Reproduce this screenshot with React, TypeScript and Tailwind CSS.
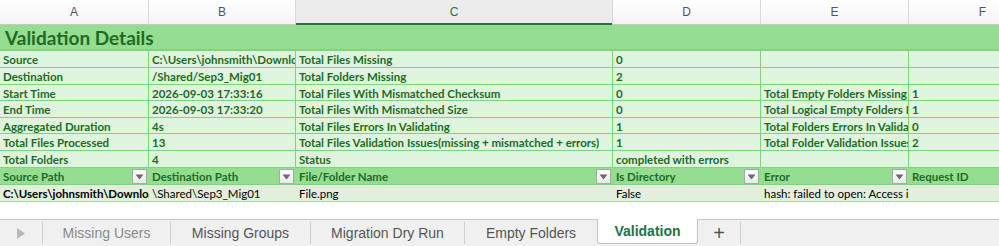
import React from "react";

const cols = "grid grid-cols-[149px_147px_317px_148px_148px_148px]";
const font = { fontFamily: "Lato, 'Liberation Sans', sans-serif" };

function Dd() {
  return (
    <span className="absolute right-[2px] top-[1px] w-[15px] h-[15px] border border-[#a9a9a9] bg-gradient-to-b from-white to-[#e9e9e9] flex items-center justify-center">
      <svg width="9" height="6" viewBox="0 0 9 6"><path d="M0.5 0.5 L8.5 0.5 L4.5 5.5 Z" fill="#6b6b6b" /></svg>
    </span>
  );
}

type Row = { cells: string[]; h: string };

const summary: Row[] = [
  { cells: ["Source", "C:\\Users\\johnsmith\\Downloads\\Sep3", "Total Files Missing", "0", "", ""], h: "h-[17px]" },
  { cells: ["Destination", "/Shared/Sep3_Mig01", "Total Folders Missing", "2", "", ""], h: "h-[17px]" },
  { cells: ["Start Time", "2026-09-03 17:33:16", "Total Files With Mismatched Checksum", "0", "Total Empty Folders Missing", "1"], h: "h-[16px]" },
  { cells: ["End Time", "2026-09-03 17:33:20", "Total Files With Mismatched Size", "0", "Total Logical Empty Folders Missing", "1"], h: "h-[17px]" },
  { cells: ["Aggregated Duration", "4s", "Total Files Errors In Validating", "1", "Total Folders Errors In Validating", "0"], h: "h-[16px]" },
  { cells: ["Total Files Processed", "13", "Total Files Validation Issues(missing + mismatched + errors)", "1", "Total Folder Validation Issues", "2"], h: "h-[17px]" },
  { cells: ["Total Folders", "4", "Status", "completed with errors", "", ""], h: "h-[17px]" },
];

const filterHead = ["Source Path", "Destination Path", "File/Folder Name", "Is Directory", "Error", "Request ID"];
const dataRow = ["C:\\Users\\johnsmith\\Downloads\\Sep3\\File.png", "\\Shared\\Sep3_Mig01", "File.png", "False", "hash: failed to open: Access is denied.", ""];

export default function App() {
  const letters = ["A", "B", "C", "D", "E", "F"];
  return (
    <div className="w-[999px] h-[246px] overflow-hidden bg-white relative" style={font}>
      {/* column headers */}
      <div className={`${cols} h-[25px] border-b border-[#c6c6c6] bg-gradient-to-b from-white to-[#f4f4f4]`}>
        {letters.map((l, i) =>
          i === 2 ? (
            <div key={l} className="relative bg-[#ececec] flex items-center justify-center text-[12px] text-[#217346] border-r border-[#dadada]" style={{ fontFamily: "'Liberation Sans', sans-serif" }}>
              {l}
              <div className="absolute left-0 right-0 bottom-[-1px] h-[2px] bg-[#217346]" />
            </div>
          ) : (
            <div key={l} className="flex items-center justify-center text-[12px] text-[#555] border-r border-[#dadada]" style={{ fontFamily: "'Liberation Sans', sans-serif" }}>
              {l}
            </div>
          )
        )}
      </div>

      {/* title */}
      <div className="h-[26px] bg-[#95dd90] border-b-2 border-[#7fd47b] flex items-center pl-[5px]">
        <span className="text-[19px] font-bold text-[#1e6b25] leading-none">Validation Details</span>
      </div>

      {/* summary rows */}
      {summary.map((r, ri) => (
        <div key={ri} className={`${cols} ${r.h} bg-[#def4dc] border-b border-[#7fd47b]`}>
          {r.cells.map((c, ci) => (
            <div key={ci} className="border-r border-[#7fd47b] overflow-hidden whitespace-nowrap pl-[3px] text-[11.5px] font-bold text-[#1f6b26] leading-[17px]">
              {c}
            </div>
          ))}
        </div>
      ))}

      {/* filter header */}
      <div className={`${cols} h-[17px] bg-[#95dd90] border-b border-[#7fd47b]`}>
        {filterHead.map((c, ci) => (
          <div key={ci} className="relative overflow-hidden whitespace-nowrap pl-[3px] text-[11.5px] font-bold text-[#1f6b26] leading-[17px]">
            {c}
            {ci < 5 && <Dd />}
          </div>
        ))}
      </div>

      {/* data row */}
      <div className={`${cols} h-[17px] bg-[#e2efdc] border-b border-[#a8dca4]`}>
        {dataRow.map((c, ci) => (
          <div key={ci} className={`overflow-hidden whitespace-nowrap pl-[3px] text-[11.5px] leading-[17px] text-black ${ci === 0 ? "font-bold" : ""}`}>
            {c}
          </div>
        ))}
      </div>

      {/* tab bar */}
      <div className="absolute left-0 right-0 top-[219px] bottom-0 bg-[#f0f0f0] border-t border-[#c8c8c8] flex text-[14px] text-[#555]" style={{ fontFamily: "'Liberation Sans', sans-serif" }}>
        <div className="w-[43px] flex items-center justify-center border-r border-[#cfcfcf] my-[2px]">
          <svg width="8" height="11" viewBox="0 0 8 11"><path d="M0 0 L8 5.5 L0 11 Z" fill="#b9b9b9" /></svg>
        </div>
        <div className="w-[128px] flex items-center justify-center border-r border-[#cfcfcf] my-[2px] text-[#8a8a8a]">Missing Users</div>
        <div className="w-[140px] flex items-center justify-center border-r border-[#cfcfcf] my-[2px]">Missing Groups</div>
        <div className="w-[154px] flex items-center justify-center border-r border-[#cfcfcf] my-[2px]">Migration Dry Run</div>
        <div className="w-[132px] flex items-center justify-center my-[2px]">Empty Folders</div>
        <div className="w-[101px] h-[25px] -mt-[1px] bg-white border border-t-0 border-[#c4c4c4] rounded-b-[3px] flex items-center justify-center font-bold text-[#217346]">Validation</div>
        <div className="w-[43px] flex items-center justify-center border-r border-[#cfcfcf] my-[2px] text-[20px] text-[#555]">+</div>
      </div>
    </div>
  );
}
